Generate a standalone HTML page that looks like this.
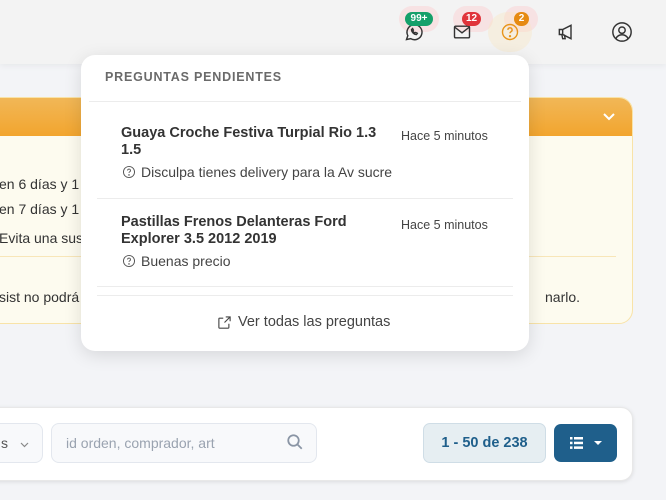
<!DOCTYPE html>
<html><head><meta charset="utf-8"><style>
*{box-sizing:border-box;margin:0;padding:0}
body{width:666px;height:500px;overflow:hidden;background:#f3f4f7;font-family:"Liberation Sans",sans-serif;position:relative;color:#333}
.hdr{position:absolute;left:0;top:0;width:666px;height:64px;background:#f3f3f3;box-shadow:0 2px 6px rgba(0,0,0,.05)}
.ic{position:absolute;top:22px}
.halo{position:absolute;width:40px;height:26px;border-radius:13px;background:#f7e2e3}
.badge{position:absolute;height:14px;border-radius:7px;color:#fff;font-size:10px;font-weight:bold;text-align:center;line-height:14px}
.card{position:absolute;left:-20px;top:97px;width:653px;height:227px;border:1px solid #f8e3a8;border-radius:14px;background:#fdfbef;overflow:hidden}
.card .h{height:38px;background:linear-gradient(#f1b757,#f2a52e)}
.card p{position:absolute;left:18px;font-size:14px;color:#333}
.dd{position:absolute;left:81px;top:55px;width:448px;height:296px;background:#fff;border-radius:14px;box-shadow:0 4px 18px rgba(0,0,0,.12)}
.t{position:absolute;font-size:14.5px;font-weight:bold;color:#333;line-height:17px}
.tm{position:absolute;left:320px;font-size:12.5px;color:#444}
.q{position:absolute;left:41px;font-size:14px;color:#444;display:flex;align-items:center;gap:5px}
.sep{position:absolute;height:1px;background:#ececec}
.bot{position:absolute;left:-20px;top:407px;width:653px;height:74px;background:#fff;border-radius:12px;box-shadow:0 1px 4px rgba(0,0,0,.1);border:1px solid #e8e8e8}
</style></head><body>
<div class="hdr"></div>
<div class="halo" style="left:399px;top:6px"></div>
<div class="halo" style="left:453px;top:6px"></div>
<div class="halo" style="left:504px;top:6px;width:34px"></div>
<div style="position:absolute;left:488px;top:12px;width:44px;height:40px;border-radius:20px;background:rgba(250,230,190,.35)"></div>
<svg class="ic" style="left:404px" width="20" height="20" viewBox="0 0 24 24" fill="none" stroke="#333" stroke-width="1.7"><path d="M3 21l1.6-4.6A9 9 0 1 1 8 20z"/><path d="M9 9c0 3 3 6 6 6l1-1.5-2-1-1 .8c-1-.5-2-1.5-2.5-2.5l.8-1-1-2z"/></svg>
<svg class="ic" style="left:452px" width="20" height="20" viewBox="0 0 24 24" fill="none" stroke="#333" stroke-width="1.7"><rect x="3" y="5" width="18" height="14" rx="1.5"/><path d="M3 6l9 7 9-7"/></svg>
<svg class="ic" style="left:500px" width="20" height="20" viewBox="0 0 24 24" fill="none" stroke="#e8951c" stroke-width="1.7"><circle cx="12" cy="12" r="9"/><path d="M9.5 9.5a2.5 2.5 0 1 1 3.5 2.3c-.7.4-1 .9-1 1.7"/><circle cx="12" cy="17" r=".6" fill="#e8951c"/></svg>
<svg class="ic" style="left:556px" width="20" height="20" viewBox="0 0 24 24" fill="none" stroke="#333" stroke-width="1.7"><path d="M4 9h4l10-5v16L8 15H4z"/><path d="M8 9v6M7 15l1 5h3l-1-5"/></svg>
<svg class="ic" style="left:611px;top:21px" width="22" height="22" viewBox="0 0 24 24" fill="none" stroke="#333" stroke-width="1.6"><circle cx="12" cy="12" r="10"/><circle cx="12" cy="10" r="3.5"/><path d="M5.5 19c1.5-3 4-4 6.5-4s5 1 6.5 4"/></svg>
<div class="badge" style="left:405px;top:12px;width:28px;background:#16a06a">99+</div>
<div class="badge" style="left:462px;top:12px;width:19px;background:#e0343b">12</div>
<div class="badge" style="left:514px;top:12px;width:15px;background:#e68a12">2</div>

<div class="card"><div class="h"></div>
<svg style="position:absolute;left:621px;top:14px" width="14" height="10" viewBox="0 0 14 10"><path d="M2 2l5 5 5-5" stroke="#fff" stroke-width="2" fill="none"/></svg>
<p style="top:78px">en 6 días y 1</p><p style="top:103px">en 7 días y 1</p><p style="top:132px">Evita una sus</p>
<div style="position:absolute;left:0;right:16px;top:158px;height:1px;background:#f8e6b8"></div>
<p style="top:191px">sist no podrá</p><p style="top:191px;left:564px">narlo.</p>
</div>

<div class="dd">
<div style="position:absolute;left:24px;top:15px;font-size:12.5px;font-weight:bold;color:#6a6a6a;letter-spacing:.8px">PREGUNTAS PENDIENTES</div>
<div class="sep" style="left:8px;width:432px;top:46px"></div>
<div class="t" style="left:40px;top:70px;width:265px">Guaya Croche Festiva Turpial Rio 1.3 1.5</div>
<div class="tm" style="top:74px">Hace 5 minutos</div>
<div class="q" style="top:109px"><svg width="14" height="14" viewBox="0 0 24 24" fill="none" stroke="#555" stroke-width="1.6"><circle cx="12" cy="12" r="9.5"/><path d="M9.5 9.5a2.5 2.5 0 1 1 3.5 2.3c-.7.4-1 .9-1 1.7"/><circle cx="12" cy="17" r=".6"/></svg>Disculpa tienes delivery para la Av sucre</div>
<div class="sep" style="left:16px;width:416px;top:143px"></div>
<div class="t" style="left:40px;top:159px;width:260px">Pastillas Frenos Delanteras Ford Explorer 3.5 2012 2019</div>
<div class="tm" style="top:163px">Hace 5 minutos</div>
<div class="q" style="top:198px"><svg width="14" height="14" viewBox="0 0 24 24" fill="none" stroke="#555" stroke-width="1.6"><circle cx="12" cy="12" r="9.5"/><path d="M9.5 9.5a2.5 2.5 0 1 1 3.5 2.3c-.7.4-1 .9-1 1.7"/><circle cx="12" cy="17" r=".6"/></svg>Buenas precio</div>
<div class="sep" style="left:16px;width:416px;top:231px"></div>
<div class="sep" style="left:16px;width:416px;top:240px"></div>
<div style="position:absolute;left:136px;top:259px;font-size:14.5px;color:#444;display:flex;align-items:center;gap:6px"><svg width="15" height="15" viewBox="0 0 24 24" fill="none" stroke="#444" stroke-width="1.8"><path d="M14 3h7v7M21 3l-9 9M19 14v6a1 1 0 0 1-1 1H4a1 1 0 0 1-1-1V6a1 1 0 0 1 1-1h6"/></svg>Ver todas las preguntas</div>
</div>

<div class="bot"></div>
<div style="position:absolute;left:-10px;top:423px;width:53px;height:40px;border:1px solid #e3e7ee;border-radius:8px;background:#f8f9fb;font-size:14px;color:#555;padding:11px 0 0 10px">s <svg style="margin-left:8px" width="9" height="6" viewBox="0 0 9 6"><path d="M1 1l3.5 3.5L8 1" stroke="#888" stroke-width="1.2" fill="none"/></svg></div>
<div style="position:absolute;left:51px;top:423px;width:266px;height:40px;border:1px solid #e3e7ee;border-radius:8px;background:#f8f9fb;font-size:14px;color:#9aa3b0;padding:11px 0 0 14px">id orden, comprador, art</div>
<svg style="position:absolute;left:286px;top:433px" width="18" height="18" viewBox="0 0 24 24" fill="none" stroke="#8a95a5" stroke-width="2.4"><circle cx="10" cy="10" r="7"/><path d="M15 15l6 6"/></svg>
<div style="position:absolute;left:423px;top:423px;width:123px;height:40px;border:1px solid #cfdde6;border-radius:7px;background:#e6eef2;color:#1f5f8b;font-size:14.5px;font-weight:bold;text-align:center;line-height:38px">1 - 50 de 238</div>
<div style="position:absolute;left:554px;top:424px;width:63px;height:38px;border-radius:7px;background:#1f5f8b"></div>
<svg style="position:absolute;left:570px;top:436px" width="34" height="14" viewBox="0 0 34 14" fill="#fff"><rect x="0" y="1" width="2.5" height="2.5"/><rect x="4" y="1" width="9" height="2.5"/><rect x="0" y="5.7" width="2.5" height="2.5"/><rect x="4" y="5.7" width="9" height="2.5"/><rect x="0" y="10.4" width="2.5" height="2.5"/><rect x="4" y="10.4" width="9" height="2.5"/><path d="M24 5h8l-4 4z"/></svg>
</body></html>
